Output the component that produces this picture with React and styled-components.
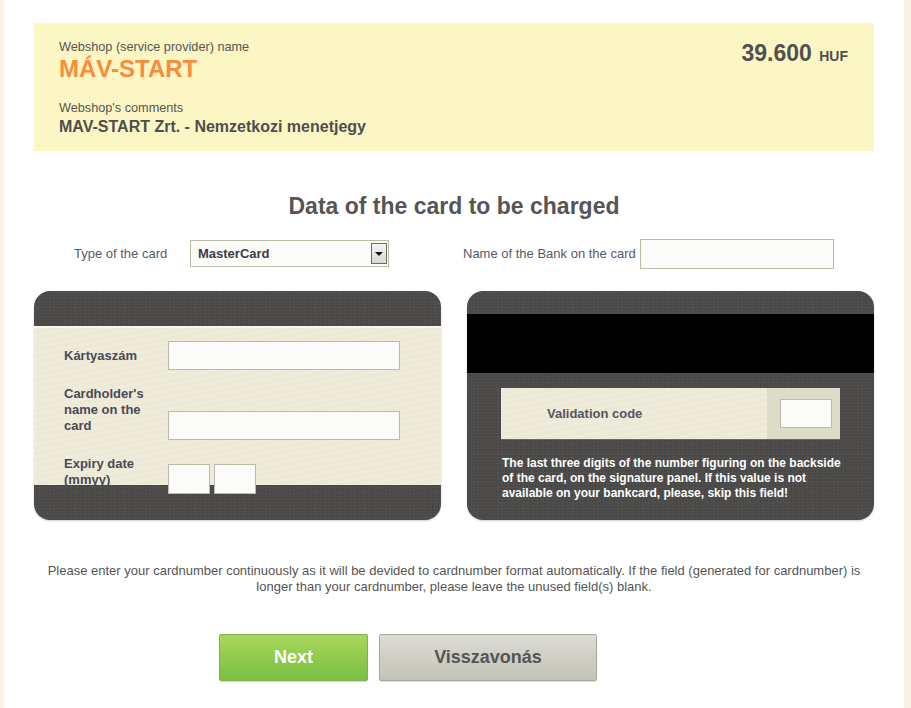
import React from 'react'
import styled, { createGlobalStyle } from 'styled-components'

const GlobalStyle = createGlobalStyle`
  html, body {
    margin: 0;
    padding: 0;
  }
  body {
    background-color: #f8f3e4;
    font-family: 'Liberation Sans', Arial, sans-serif;
    color: #555555;
  }
`

const Page = styled.div`
  background: #ffffff;
  margin-left: 4px;
  width: 900px;
  min-height: 100vh;
  padding-top: 23px;
  box-sizing: border-box;
`

const Content = styled.div`
  width: 840px;
  margin: 0 auto;
`

const ShopBox = styled.div`
  background-color: #fcf6c5;
  height: 128px;
  box-sizing: border-box;
  padding: 17px 26px 0 25px;
  display: flex;
  justify-content: space-between;
`

const ShopInfo = styled.div`
  display: flex;
  flex-direction: column;
`

const SmallLabel = styled.div`
  font-size: 12.7px;
  line-height: 14px;
  color: #555555;
  margin-top: ${(p) => p.$top || 0}px;
`

const ShopName = styled.div`
  font-size: 24px;
  font-weight: bold;
  color: #f98c3d;
  line-height: 28px;
  margin-top: 1px;
`

const Comment = styled.div`
  font-size: 16px;
  font-weight: bold;
  color: #4e4e4e;
  line-height: 18px;
  margin-top: 3px;
`

const Price = styled.div`
  font-size: 23px;
  font-weight: bold;
  color: #505050;
  line-height: 26px;
  white-space: nowrap;

  span {
    font-size: 14px;
    margin-left: 1px;
  }
`

const Heading = styled.h2`
  margin: 42px 0 0;
  text-align: center;
  font-size: 23px;
  line-height: 26px;
  font-weight: bold;
  color: #555555;
`

const Columns = styled.div`
  display: grid;
  grid-template-columns: 407px 407px;
  column-gap: 26px;
`

const TopRow = styled(Columns)`
  margin-top: 20px;
  height: 52px;
`

const Field = styled.div`
  display: flex;
  align-items: center;
  height: 29px;
  padding-left: ${(p) => p.$pad || 0}px;
  margin-left: ${(p) => p.$shift || 0}px;
`

const FieldLabel = styled.label`
  font-size: 13px;
  color: #575a68;
  width: ${(p) => (p.$width ? `${p.$width}px` : 'auto')};
  margin-right: ${(p) => p.$gap || 0}px;
  white-space: nowrap;
`

const Select = styled.div`
  width: 199px;
  height: 27px;
  box-sizing: border-box;
  border: 1px solid #bdbca8;
  background: #fbfbf9;
  display: flex;
  align-items: center;
  justify-content: space-between;
  padding: 0 1px 0 7px;
  font-size: 13px;
  font-weight: bold;
  color: #3c3c46;
`

const SelectButton = styled.span`
  width: 16px;
  height: 21px;
  box-sizing: border-box;
  border: 1px solid #6b6b6b;
  background: linear-gradient(#f4f4f4, #d9d9d9);
  display: flex;
  align-items: center;
  justify-content: center;

  &::after {
    content: '';
    border-left: 4px solid transparent;
    border-right: 4px solid transparent;
    border-top: 4px solid #111;
  }
`

const TextInput = styled.input`
  box-sizing: border-box;
  width: ${(p) => p.$w}px;
  height: ${(p) => p.$h || 29}px;
  border: 1px solid #bcbba7;
  background: #fbfbf9;
  padding: 0 4px;
  font-family: inherit;
  font-size: 13px;
  outline: none;
  position: relative;
`

const darkTexture = `
  background-color: #4a4947;
  background-image:
    radial-gradient(rgba(255,255,255,0.035) 1px, transparent 1.5px),
    radial-gradient(rgba(0,0,0,0.06) 1px, transparent 1.5px);
  background-size: 3px 3px, 5px 5px;
  background-position: 0 0, 1px 2px;
`

const beigeTexture = `
  background-color: #ede9d7;
  background-image: repeating-linear-gradient(
    170deg,
    rgba(255,255,255,0.16) 0px,
    rgba(255,255,255,0.16) 2px,
    transparent 2px,
    transparent 6px
  );
`

const Card = styled.div`
  height: 229px;
  border-radius: 16px;
  ${darkTexture}
  box-shadow: 0 1px 2px rgba(0,0,0,0.2);
  display: flex;
  flex-direction: column;
`

const FrontBand = styled.div`
  margin-top: 35px;
  height: 159px;
  box-sizing: border-box;
  ${beigeTexture}
  border-top: 2px solid #f7f4e8;
  padding: 13px 0 0 30px;
  display: flex;
  flex-direction: column;
  gap: 16px;
`

const FormRow = styled.div`
  display: flex;
  align-items: flex-end;
`

const CardLabel = styled.div`
  width: 104px;
  flex-shrink: 0;
  font-size: 13px;
  line-height: 16px;
  font-weight: bold;
  color: #4a4a52;
  padding-bottom: 6px;
  padding-right: 14px;
  box-sizing: border-box;
`

const ExpiryInputs = styled.div`
  display: flex;
  gap: 4px;
`

const MagStripe = styled.div`
  margin-top: 23px;
  height: 59px;
  background: #000000;
`

const ValidationPanel = styled.div`
  margin: 15px 34px 0;
  height: 51px;
  ${beigeTexture}
  display: flex;
  align-items: stretch;
  box-shadow: 0 1px 0 rgba(255,255,255,0.15);
`

const ValidationLabel = styled.div`
  flex: 1;
  display: flex;
  align-items: center;
  padding-left: 46px;
  font-size: 13px;
  font-weight: bold;
  color: #55555f;
`

const ValidationBox = styled.div`
  width: 73px;
  background-color: #dedbc9;
  display: flex;
  align-items: center;
  padding-left: 13px;
  box-sizing: border-box;
`

const BackNote = styled.p`
  margin: 17px 26px 0 35px;
  font-size: 12px;
  line-height: 15px;
  font-weight: bold;
  color: #ffffff;
`

const Note = styled.p`
  margin: 43px auto 0;
  width: 830px;
  text-align: center;
  font-size: 13px;
  line-height: 16px;
  color: #555555;
`

const ButtonBar = styled.div`
  display: flex;
  gap: 11px;
  margin-top: 39px;
  padding-left: 185px;
`

const Button = styled.button`
  height: 47px;
  width: ${(p) => p.$w}px;
  border-radius: 2px;
  font-family: 'Liberation Sans', Arial, sans-serif;
  font-size: 18px;
  font-weight: bold;
  cursor: pointer;
  border: 1px solid ${(p) => (p.$primary ? '#7fb24a' : '#a9a99d')};
  color: ${(p) => (p.$primary ? '#ffffff' : '#555555')};
  background: ${(p) =>
    p.$primary
      ? 'linear-gradient(#a8d65a, #79c043)'
      : 'linear-gradient(#dcdcd4, #c2c2b6)'};
  box-shadow: 0 1px 1px rgba(0,0,0,0.15);
`

export default function App() {
  return (
    <>
      <GlobalStyle />
      <Page>
        <Content>
          <ShopBox>
            <ShopInfo>
              <SmallLabel>Webshop (service provider) name</SmallLabel>
              <ShopName>MÁV-START</ShopName>
              <SmallLabel $top={18}>Webshop's comments</SmallLabel>
              <Comment>MAV-START Zrt. - Nemzetkozi menetjegy</Comment>
            </ShopInfo>
            <Price>
              39.600 <span>HUF</span>
            </Price>
          </ShopBox>

          <Heading>Data of the card to be charged</Heading>

          <TopRow>
            <Field $pad={40}>
              <FieldLabel $width={116}>Type of the card</FieldLabel>
              <Select>
                MasterCard
                <SelectButton />
              </Select>
            </Field>
            <Field $shift={-4}>
              <FieldLabel $gap={4}>Name of the Bank on the card</FieldLabel>
              <TextInput $w={194} $h={30} />
            </Field>
          </TopRow>

          <Columns>
            <Card>
              <FrontBand>
                <FormRow>
                  <CardLabel>Kártyaszám</CardLabel>
                  <TextInput $w={232} />
                </FormRow>
                <FormRow>
                  <CardLabel>Cardholder's name on the card</CardLabel>
                  <TextInput $w={232} />
                </FormRow>
                <FormRow>
                  <CardLabel>Expiry date (mmyy)</CardLabel>
                  <ExpiryInputs>
                    <TextInput $w={42} $h={30} />
                    <TextInput $w={42} $h={30} />
                  </ExpiryInputs>
                </FormRow>
              </FrontBand>
            </Card>

            <Card>
              <MagStripe />
              <ValidationPanel>
                <ValidationLabel>Validation code</ValidationLabel>
                <ValidationBox>
                  <TextInput $w={52} />
                </ValidationBox>
              </ValidationPanel>
              <BackNote>
                The last three digits of the number figuring on the backside
                of the card, on the signature panel. If this value is not
                available on your bankcard, please, skip this field!
              </BackNote>
            </Card>
          </Columns>

          <Note>
            Please enter your cardnumber continuously as it will be devided to
            cardnumber format automatically. If the field (generated for
            cardnumber) is longer than your cardnumber, please leave the unused
            field(s) blank.
          </Note>

          <ButtonBar>
            <Button $primary $w={149}>Next</Button>
            <Button $w={218}>Visszavonás</Button>
          </ButtonBar>
        </Content>
      </Page>
    </>
  )
}
